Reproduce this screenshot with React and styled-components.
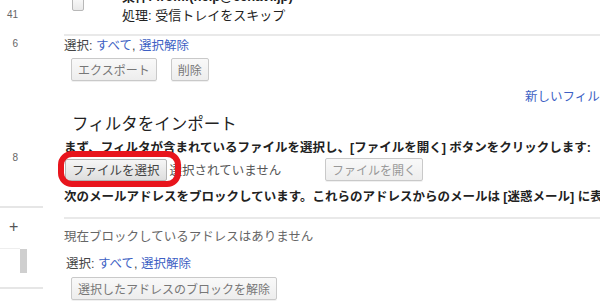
import React from "react"
import styled, { createGlobalStyle } from "styled-components"

const GlobalStyle = createGlobalStyle`
  html, body {
    margin: 0;
    padding: 0;
    background: #fff;
  }
  body {
    width: 600px;
    height: 305px;
    overflow: hidden;
    font-family: "Liberation Sans", "Noto Sans CJK JP", sans-serif;
    color: #222;
  }
`

const Page = styled.div`
  display: flex;
  width: 600px;
  height: 305px;
  overflow: hidden;
`

/* left gutter: row counts + collapsed side panel */
const Gutter = styled.div`
  width: 64px;
  flex: none;
  display: flex;
  flex-direction: column;
`

const Count = styled.div`
  width: 18px;
  margin-top: ${(p) => p.$gap}px;
  text-align: right;
  font-size: 10px;
  line-height: 12px;
  color: #666;
`

const GutterRule = styled.div`
  width: 43px;
  height: 2px;
  margin-top: ${(p) => p.$gap}px;
  background: #e6e6e6;
`

const AddSign = styled.div`
  margin-top: 11px;
  padding-left: 9px;
  font-size: 16px;
  line-height: 16px;
  color: #555;
`

const ScrollRow = styled.div`
  display: flex;
  margin-top: 13px;
  height: 25px;
`

const ScrollEdge = styled.div`
  width: 20px;
  border-top: 1px solid #eee;
`

const ScrollThumb = styled.div`
  width: 7px;
  height: 24px;
  margin-top: 1px;
  background: #cfcfcf;
`

/* main settings column */
const Main = styled.div`
  flex: 1;
  min-width: 0;
  display: flex;
  flex-direction: column;
  white-space: nowrap;
  font-size: 12.5px;
`

const FilterItem = styled.div`
  display: flex;
  margin-top: -13px;
`

const Checkbox = styled.span`
  width: 10px;
  height: 12px;
  margin: 10px 0 0 8px;
  border: 1px solid #b8b8b8;
  border-radius: 2px;
  background: linear-gradient(#fafafa, #e9e9e9);
  flex: none;
`

const RuleText = styled.div`
  margin-left: 38px;
  font-size: 13px;
  line-height: 19px;
`

const RuleLine = styled.div`
  font-weight: ${(p) => (p.$bold ? 700 : 400)};
`

const Rule = styled.div`
  height: 2px;
  margin-top: ${(p) => p.$gap}px;
  background: #e9e9e9;
`

const SelectLine = styled.div`
  margin-top: ${(p) => p.$gap}px;
  padding-left: ${(p) => p.$indent || 0}px;
  line-height: 16px;
  color: #444;
`

const Link = styled.a`
  color: #3d5fc4;
  text-decoration: none;
  cursor: pointer;
`

const ButtonRow = styled.div`
  display: flex;
  gap: 14px;
  margin-top: ${(p) => p.$gap}px;
  padding-left: 7px;
`

const Button = styled.button`
  height: 23px;
  padding: 0 6px;
  border: 1px solid #c9c9c9;
  border-radius: 2px;
  background: linear-gradient(#f9f9f9, #ededed);
  box-shadow: 0 1px 0 rgba(0, 0, 0, 0.06);
  font-family: inherit;
  font-size: 12px;
  color: ${(p) => (p.$muted ? "#999" : "#777")};
`

const NewFilter = styled.div`
  margin-top: 8px;
  padding-left: 461px;
  line-height: 16px;
`

const Heading = styled.h2`
  margin: 8px 0 0;
  padding-left: 8px;
  font-size: 16.5px;
  line-height: 22px;
  font-weight: 400;
  color: #222;
`

const Bold = styled.div`
  margin-top: ${(p) => p.$gap}px;
  line-height: 16px;
  font-weight: 700;
  color: #222;
`

const FileRow = styled.div`
  position: relative;
  display: flex;
  align-items: center;
  margin-top: 2px;
  padding-left: 1px;
`

const FilePicker = styled.div`
  display: flex;
  align-items: center;
  width: 260px;
`

const PickButton = styled.button`
  height: 22px;
  padding: 0 6px;
  border: 1px solid #b4b4b4;
  border-radius: 2px;
  background: linear-gradient(#f6f6f6, #dedede);
  font-family: inherit;
  font-size: 12.5px;
  color: #444;
`

const NoFile = styled.span`
  margin-left: 3px;
  color: #555;
`

const Highlight = styled.div`
  position: absolute;
  left: -6px;
  top: -7px;
  width: 111px;
  height: 24px;
  border: 6px solid #e8151d;
  border-radius: 14px;
  pointer-events: none;
`

const Empty = styled.div`
  margin-top: 10px;
  line-height: 16px;
  color: #666;
`

export default function App() {
  return (
    <>
      <GlobalStyle />
      <Page>
        <Gutter>
          <Count $gap={9}>41</Count>
          <Count $gap={17}>6</Count>
          <Count $gap={102}>8</Count>
          <GutterRule $gap={42} />
          <AddSign>+</AddSign>
          <ScrollRow>
            <ScrollEdge />
            <ScrollThumb />
          </ScrollRow>
          <GutterRule $gap={14} />
        </Gutter>

        <Main>
          <FilterItem>
            <Checkbox />
            <RuleText>
              <RuleLine $bold>条件: from:(help@echavi.jp)</RuleLine>
              <RuleLine>処理: 受信トレイをスキップ</RuleLine>
            </RuleText>
          </FilterItem>
          <Rule $gap={9} />

          <SelectLine $gap={2}>
            選択: <Link>すべて</Link>, <Link>選択解除</Link>
          </SelectLine>
          <ButtonRow $gap={4}>
            <Button>エクスポート</Button>
            <Button>削除</Button>
          </ButtonRow>

          <NewFilter>
            <Link>新しいフィルタを作成</Link>
          </NewFilter>

          <Heading>フィルタをインポート</Heading>
          <Bold $gap={5}>
            まず、フィルタが含まれているファイルを選択し、[ファイルを開く] ボタンをクリックします:
          </Bold>
          <FileRow>
            <FilePicker>
              <PickButton>ファイルを選択</PickButton>
              <NoFile>選択されていません</NoFile>
            </FilePicker>
            <Button $muted>ファイルを開く</Button>
            <Highlight />
          </FileRow>

          <Bold $gap={8}>
            次のメールアドレスをブロックしています。これらのアドレスからのメールは [迷惑メール] に表示されます:
          </Bold>
          <Rule $gap={12} />
          <Empty>現在ブロックしているアドレスはありません</Empty>

          <SelectLine $gap={11} $indent={2}>
            選択: <Link>すべて</Link>, <Link>選択解除</Link>
          </SelectLine>
          <ButtonRow $gap={5}>
            <Button>選択したアドレスのブロックを解除</Button>
          </ButtonRow>
        </Main>
      </Page>
    </>
  )
}
